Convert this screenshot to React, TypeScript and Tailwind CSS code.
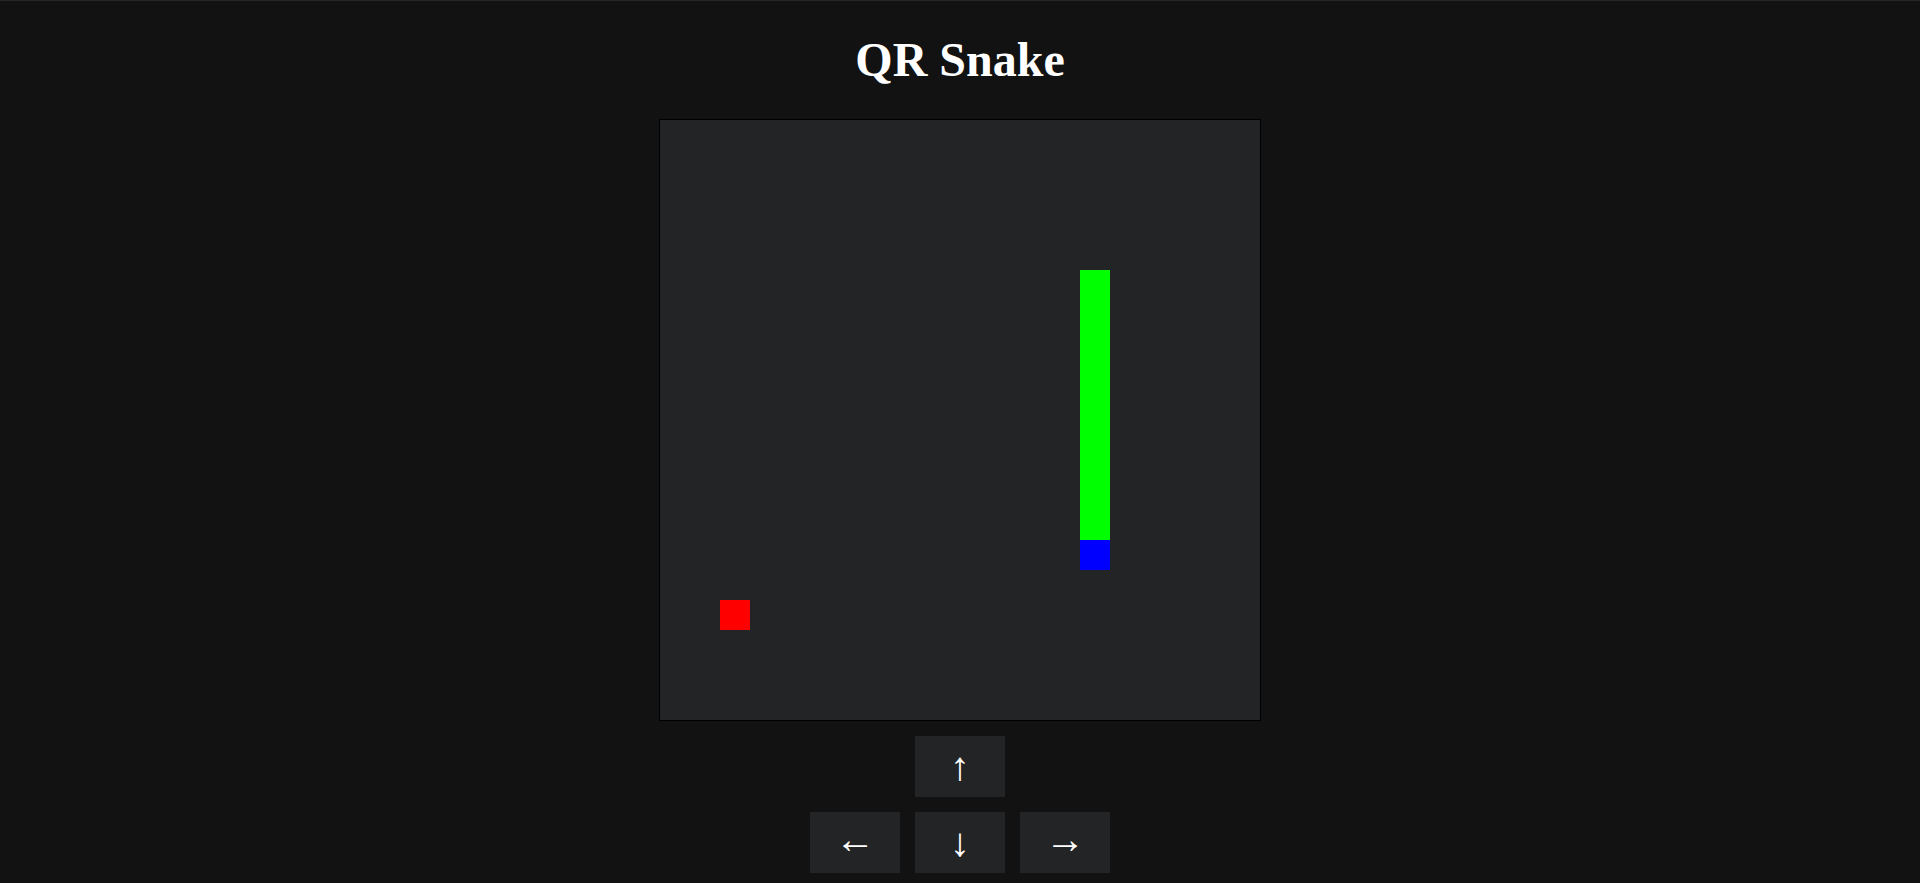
import React from "react";

const CELL = 30;

function Cell({ x, y, color }: { x: number; y: number; color: string }) {
  return (
    <div
      className="absolute"
      style={{ left: x * CELL, top: y * CELL, width: CELL, height: CELL, background: color }}
    />
  );
}

export default function App() {
  const snake = [5, 6, 7, 8, 9, 10, 11, 12, 13];
  const btn =
    "w-[90px] h-[61px] bg-[#232426] text-white text-[40px] leading-none flex items-center justify-center";
  return (
    <div
      className="min-h-[883px] bg-[#121212] border-t border-[#25262a] flex flex-col items-center"
      style={{ fontFamily: '"Liberation Serif", "Times New Roman", serif' }}
    >
      <h1 className="mt-[31px] text-[48px] leading-[55px] font-bold text-white">QR Snake</h1>
      <div className="mt-[32px] border border-black bg-[#232426] w-[602px] h-[602px]">
        <div className="relative w-[600px] h-[600px]">
          {snake.map((y) => (
            <Cell key={y} x={14} y={y} color="#00ff00" />
          ))}
          <Cell x={14} y={14} color="#0000ff" />
          <Cell x={2} y={16} color="#ff0000" />
        </div>
      </div>
      <div className="mt-[15px] flex flex-col items-center gap-[15px]">
        <button className={btn}>↑</button>
        <div className="flex gap-[15px]">
          <button className={`${btn} pb-[6px]`}>←</button>
          <button className={btn}>↓</button>
          <button className={`${btn} pb-[6px]`}>→</button>
        </div>
      </div>
    </div>
  );
}
